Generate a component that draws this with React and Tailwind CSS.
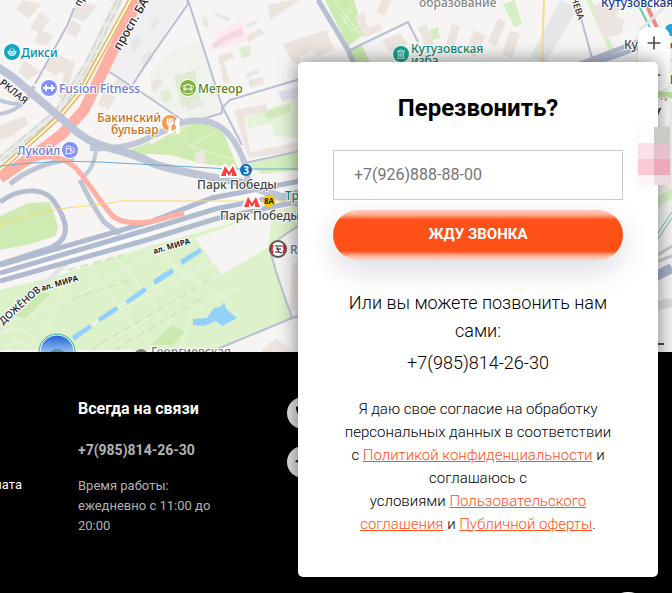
import { FaPhoneAlt, FaTelegramPlane, FaUtensils } from "react-icons/fa";
import { ShoppingBasket, Landmark, Fuel, Plus, Minus, Navigation } from "lucide-react";

const buildings = [
  "22,0 42,4 28,18 16,10",
  "40,12 50,20 40,34 30,28",
  "78,0 96,6 84,22 70,16",
  "72,20 82,26 76,38 66,32",
  "40,30 54,36 46,46 34,42",
  "25,60 40,72 28,80 18,72",
  "52,52 70,60 56,76 44,68",
  "55,55 75,62 66,98 58,98 64,74 48,66",
  "0,125 25,116 28,124 12,136 0,140",
  "118,78 132,86 128,92 112,84",
  "104,90 116,98 108,110 98,104",
  "218,56 232,52 234,58 224,62 230,82 224,84",
  "247,36 260,28 264,34 248,42",
  "248,80 263,77 264,84 250,88",
  "268,5 292,0 300,0 270,20",
  "283,44 300,38 300,64 292,62",
  "202,16 207,18 209,26 204,27",
  "151,84 158,78 163,82 154,94",
  "234,110 266,104 268,112 244,116 250,152 298,142 298,152 248,158",
  "300,38 326,30 334,50 318,56 312,50 300,56",
  "355,16 364,12 368,28 380,24 382,30 364,38",
  "382,0 392,0 384,16 376,12",
  "382,40 400,33 408,44 390,52",
  "418,28 426,24 434,44 426,48",
  "452,24 460,26 454,48 446,44",
  "474,30 486,36 476,58 466,52",
  "498,18 506,22 496,46 488,42",
  "510,30 520,34 512,58 502,54",
  "592,6 610,0 620,8 616,16 598,20",
  "596,22 612,14 624,20 622,34 604,38",
  "262,350 276,338 290,350 290,352 262,352",
  "292,265 300,260 300,310 290,312",
];

const greyBlocks = [
  "560,0 578,8 546,62 530,58",
  "216,12 230,18 228,22 215,15",
  "246,24 256,20 257,24 247,28",
  "246,74 258,69 259,73 247,78",
  "185,106 202,101 203,106 187,111",
  "150,24 156,16 160,20 154,30",
  "130,40 138,34 142,42 134,52",
  "140,58 150,50 154,58 144,68",
];

const halo = { paintOrder: "stroke", stroke: "#ffffff", strokeLinejoin: "round" };

function Label({ x, y, children, size = 12, fill = "#444444", rotate = 0, weight = 500 }) {
  return (
    <text
      x={x}
      y={y}
      fill={fill}
      fontSize={size}
      fontWeight={weight}
      strokeWidth="2"
      transform={`rotate(${rotate} ${x} ${y})`}
      {...halo}
    >
      {children}
    </text>
  );
}

function Pin({ x, y, color, icon: Icon }) {
  return (
    <g>
      <circle cx={x} cy={y} r="9" fill="#ffffff" />
      <circle cx={x} cy={y} r="8" fill={color} />
      {Icon && <Icon x={x - 5} y={y - 5} width="10" height="10" color="#ffffff" />}
    </g>
  );
}

function Metro({ x, y }) {
  return (
    <path
      d={`M${x - 8} ${y + 5}L${x - 4} ${y - 5}L${x} ${y + 1}L${x + 4} ${y - 5}L${x + 8} ${y + 5}H${x + 3}L${x + 3} ${y + 1}L${x} ${y + 5}L${x - 3} ${y + 1}L${x - 3} ${y + 5}Z`}
      fill="#ff3f3f"
      stroke="#ffffff"
      strokeWidth="4"
      strokeLinejoin="round"
      paintOrder="stroke"
    />
  );
}

function CityMap() {
  return (
    <svg
      viewBox="0 0 672 352"
      preserveAspectRatio="xMinYMin slice"
      className="block h-full w-full"
      fontFamily="'Noto Sans', sans-serif"
      role="img"
      aria-label="Карта проезда"
    >
      <rect width="672" height="352" fill="#f6f5f4" />

      {/* quarters */}
      <path d="M150 0H186L150 58L135 84L108 70L142 0Z" fill="#efefef" />
      <path d="M150 70L176 48L200 43L222 112L190 122L150 96Z" fill="#f0f3ec" />
      <path d="M174 76L195 70L200 100L182 108Z" fill="#dfecd3" />
      <path d="M160 92L170 89L172 101L163 103Z" fill="#e0edd4" />
      <path d="M239 48L249 45L251 56L242 58Z" fill="#dfecd3" />
      <path d="M209 51L220 30L240 22L250 40Z" fill="#fde9ef" />
      <path d="M212 44L228 34L241 28L243 36L227 40L214 49Z" fill="#f5d6e1" />
      <path d="M278 92L298 87V98L282 102Z" fill="#e3e0ec" />
      <path d="M246 118L300 97V138L274 136L272 124L248 128Z" fill="#e4f2d8" />
      <path d="M262 112L290 104V112L268 120Z" fill="#d3e9c2" />

      {/* parks */}
      <path d="M0 290L60 275L150 246L200 232L270 212L300 205V350H0Z" fill="#ddf1ca" />
      <path d="M195 238L265 214L272 220L268 247L222 275Z" fill="#f6f5f4" />
      <path d="M300 316L212 352H300Z" fill="#f6f5f4" />
      <path d="M272 250L282 238L300 226V312L290 318Z" fill="#f5f3f2" />
      <path d="M0 216L28 203L50 202L58 226L56 236L30 244L0 250Z" fill="#cfebb1" />
      <path d="M150 145L188 124L208 123L224 134L238 168L200 163L170 155L150 154Z" fill="#cfebb1" />
      <path d="M170 136L192 125M175 130L190 146L215 132M190 146L235 160" stroke="#e6f6d8" strokeWidth="1" fill="none" />
      <path d="M195 153L204 150L206 162L196 164Z" fill="#ece7e1" />
      <path d="M248 164L300 150V170L262 174Z" fill="#d5efc0" />
      <path d="M130 150L150 142V154L136 156Z" fill="#cfebb1" />
      <path d="M325 0H354L364 34L348 46Z" fill="#cdebb0" />
      <path d="M350 50L362 46L370 62H354Z" fill="#ccebaf" />
      <path d="M430 30L438 27L440 38L432 40Z" fill="#d5ebc4" />
      <path d="M503 4L515 0L522 24L514 27Z" fill="#d7efc5" />
      <path d="M586 0H592L614 50L610 52Z" fill="#d9efc7" />
      <path d="M334 0L360 34M344 24L352 6M340 14L352 30L362 24" stroke="#e6f6d8" strokeWidth="1" fill="none" />

      {buildings.map((points) => (
        <polygon key={points} points={points} fill="#ece4df" />
      ))}
      {greyBlocks.map((points) => (
        <polygon key={points} points={points} fill="#e6e7e8" />
      ))}

      {/* park alleys */}
      <g stroke="#eef7e5" strokeWidth="1" fill="none">
        <path d="M0 325L70 300L150 255M92 274L103 285L152 350M60 350L120 305L205 262M95 350L220 275M80 330L215 262" />
        <path d="M45 332L62 285L74 300M120 262L190 350M150 250L235 305M180 350L192 310L240 288" />
        <path d="M0 334C15 324 30 325 40 350M5 346C20 340 30 345 32 352" />
      </g>
      <g stroke="#cfe9ba" strokeWidth="2" strokeDasharray="8 5" fill="none">
        <path d="M90 350L214 278M72 299L130 280M115 350L205 296M68 270L124 255" />
      </g>
      <path d="M12 316L36 292L50 294L26 318Z" fill="#cce9b2" />
      <path d="M150 345L172 325L185 332L172 345Z" fill="#cce9b2" />

      {/* water */}
      <g fill="#93d1fb">
        <path d="M72 336L90 324L92 328L74 341Z" />
        <path d="M98 318L116 306L119 310L100 322Z" />
        <path d="M125 301L144 287L147 291L128 304Z" />
        <path d="M153 280L172 268L174 273L155 285Z" />
        <path d="M180 260L200 248L202 252L182 265Z" />
        <path d="M193 319L207 318L214 308L222 306L224 302L226 309L237 318L222 326L216 321L204 326L193 325Z" />
      </g>

      {/* minor streets */}
      <g stroke="#b9c0d5" strokeWidth="2" fill="none" strokeLinejoin="round">
        <path d="M74 8L68 24L35 84" />
        <path d="M187 0L188 4L150 58L133 84" />
        <path d="M188 0L222 106L242 145" />
        <path d="M108 71L150 98L182 120" />
        <path d="M300 79L230 100L222 108V113L190 123" />
        <path d="M245 163L300 151" />
        <path d="M348 51L408 22L418 42" />
        <path d="M576 0L592 58" />
        <path d="M298 226L280 238L270 250L276 272L292 318L300 316M292 318L215 350" />
      </g>
      <path d="M68 262L36 291L0 330" stroke="#e4e2e2" strokeWidth="4" fill="none" />
      <path d="M318 0L348 50L354 64" stroke="#b7bfd1" strokeWidth="5" fill="none" />
      <path d="M544 0L542 64" stroke="#f3dc8c" strokeWidth="2" fill="none" />

      {/* major roads */}
      <g stroke="#c0c7d6" fill="none">
        <path d="M0 100Q20 108 28 98L34 86M28 98Q16 112 0 114" strokeWidth="4" />
        <path d="M90 148Q128 150 150 137L184 122Q214 116 230 136T248 182L270 195" strokeWidth="6" />
        <path d="M96 150Q94 168 84 176" strokeWidth="4" />
      </g>
      <path d="M0 202C20 187 43 188 53 200C66 218 74 238 50 248L0 264" stroke="#b4bed0" strokeWidth="5" fill="none" />
      <path d="M74 158Q34 164 10 184M80 180Q92 205 104 222L120 234" stroke="#bdc4d3" strokeWidth="5" fill="none" />
      <g stroke="#fafafa" strokeWidth="10" fill="none">
        <path d="M0 274L150 231L210 206L300 189" />
      </g>
      <g stroke="#b1bbcf" strokeWidth="5" fill="none">
        <path d="M0 265L150 222L212 198L300 181" />
        <path d="M0 273L150 229L215 209L300 192" />
        <path d="M0 281L150 239L215 219L300 201" />
      </g>
      <g stroke="#ffb0a6" fill="none">
        <path d="M139 -3L84 110L62 134Q35 155 0 178" strokeWidth="11" />
        <path d="M22 165Q52 147 76 168L90 186Q103 205 112 215T150 222L184 213" strokeWidth="5" />
      </g>

      {/* railway */}
      <path d="M119 0L88 64L58 112L0 160" stroke="#e9e9e6" strokeWidth="9" fill="none" />
      <path d="M117 0L85 64L56 110L0 157M121 0L90 64L61 112L0 162" stroke="#c4c6c2" strokeWidth="1" strokeDasharray="10 5" fill="none" />
      <path d="M131 -1L80 92L60 116L0 170" stroke="#e3b663" strokeWidth="5" fill="none" />
      <path d="M131 -1L80 92L60 116L0 170" stroke="#fff8e8" strokeWidth="2" fill="none" />

      {/* overpass */}
      <path d="M-4 66L14 78L70 126Q86 142 110 148T150 162T240 182L300 204" stroke="#bcc4d5" strokeWidth="8" fill="none" />

      {/* metro lines */}
      <path d="M0 166Q50 160 100 162L230 169H300" stroke="#6fa9d0" strokeWidth="1" fill="none" />
      <path d="M0 225Q40 210 75 207T120 201H300" stroke="#f6d873" strokeWidth="1" fill="none" />

      {/* right edge */}
      <path d="M580 64L648 38M592 64L650 44" stroke="#b1bbcf" strokeWidth="5" fill="none" />
      <path d="M636 0L652 32M644 0L658 32" stroke="#68c9ae" strokeWidth="2" fill="none" />
      <path d="M648 8L658 30" stroke="#ee8a86" strokeWidth="4" fill="none" />
      <path d="M640 30L672 0M650 60H672" stroke="#e3e4e8" strokeWidth="3" fill="none" />
      <path d="M658 92H672V98H658Z" fill="#bfe0a4" />
      <path d="M658 196L672 188V198L658 208Z" fill="#dcefc9" />
      <path d="M656 236L672 212M656 242L672 218" stroke="#6bbd9f" strokeWidth="1" fill="none" />
      <path d="M656 256L672 246M656 262L672 256" stroke="#c9c9c9" strokeWidth="3" fill="none" />
      <path d="M656 276L672 268" stroke="#a9b4ca" strokeWidth="10" fill="none" />
      <path d="M656 306L672 302" stroke="#dcdcdc" strokeWidth="9" fill="none" />
      <path d="M656 344H664" stroke="#444444" strokeWidth="2" />

      {/* street names */}
      <Label x={120} y={51} rotate={-60} size={12} fill="#222222">просп. БАГРАТИОНА</Label>
      <Label x={80} y={7} rotate={-62} size={10} fill="#222222">пр.</Label>
      <Label x={-1} y={84} rotate={39} size={10} fill="#222222">РКЛАЯ</Label>
      <Label x={3} y={325} rotate={-42} size={10} fill="#222222">ДОЖЁНОВ</Label>
      <Label x={42} y={291} rotate={-16} size={8} weight={700} fill="#222222">ал. МИРА</Label>
      <Label x={154} y={254} rotate={-16} size={8} weight={700} fill="#222222">ал. МИРА</Label>
      <Label x={571} y={-2} rotate={72} size={9} fill="#222222">НЕВА</Label>

      {/* places */}
      <Label x={21} y={57} fill="#0b87a8">Дикси</Label>
      <Pin x={12} y={52} color="#17a5c4" icon={ShoppingBasket} />
      <Label x={59} y={93} fill="#6d75d6">Fusion Fitness</Label>
      <Pin x={49} y={88} color="#8490fb" />
      <path d="M44 87V89M46 85V91M52 85V91M54 87V89M46 88H52" stroke="#ffffff" strokeWidth="2" fill="none" />
      <Label x={97} y={122} fill="#c97223">Бакинский</Label>
      <Label x={111} y={134} fill="#c97223">бульвар</Label>
      <Pin x={170} y={123} color="#fa9a4b" icon={FaUtensils} />
      <Label x={17} y={155} fill="#6d75d6">Лукойл</Label>
      <Pin x={70} y={150} color="#8490fb" icon={Fuel} />
      <Label x={198} y={93} fill="#52801b">Метеор</Label>
      <Pin x={188} y={88} color="#7fb43b" />
      <path d="M182 87Q188 82 194 87M183 92Q188 96 193 92M183 89H193M185 85V91M191 85V91" stroke="#ffffff" strokeWidth="1" fill="none" />
      <Label x={419} y={7} fill="#858585">образование</Label>
      <Label x={411} y={53} fill="#128772">Кутузовская</Label>
      <Label x={411} y={65} fill="#128772">изба</Label>
      <Pin x={401} y={54} color="#14a38b" icon={Landmark} />
      <Label x={601} y={7} fill="#153a92">Кутузовская</Label>
      <Label x={624} y={49}>Кутузовская</Label>
      <circle cx="671" cy="30" r="6" fill="#20a5dd" />
      <Label x={670} y={84}>Ва</Label>
      <Label x={660} y={107} fill="#df513f">К</Label>

      <Metro x={229} y={171} />
      <circle cx="246" cy="170" r="6" fill="#0871bd" />
      <text x="246" y="174" textAnchor="middle" fontSize="10" fontWeight="700" fill="#ffffff">3</text>
      <Label x={197} y={189}>Парк Победы</Label>
      <Metro x={252} y={202} />
      <circle cx="269" cy="201" r="6" fill="#ffc800" />
      <text x="269" y="204" textAnchor="middle" fontSize="8" fontWeight="700" fill="#222222">8А</text>
      <Label x={285} y={200} fill="#128772">Триумф</Label>
      <Label x={220} y={220}>Парк Победы</Label>
      <Label x={290} y={254} fill="#777777">R</Label>
      <circle cx="278" cy="249" r="8" fill="#ffffff" stroke="#5b5555" strokeWidth="2" />
      <path d="M273 245A7 7 0 0 0 273 253M283 245A7 7 0 0 1 283 253" stroke="#d8282f" strokeWidth="2" fill="none" />
      <path d="M275 246H282M276 249H281M275 252H279L277 247M279 252L282 253" stroke="#222222" strokeWidth="1" fill="none" />
      <Label x={151} y={356} fill="#777777">Георгиевская</Label>
      <circle cx="141" cy="356" r="7" fill="#848484" />

      <defs>
        <linearGradient id="marker" x1="0" y1="0" x2="0" y2="1">
          <stop offset="0" stopColor="#1c63d7" />
          <stop offset="0.45" stopColor="#8ab4ed" />
        </linearGradient>
      </defs>
      <circle cx="57" cy="352" r="17" fill="url(#marker)" stroke="#ffffff" strokeWidth="1" />
      <circle cx="57" cy="352" r="18" fill="none" stroke="#35a995" strokeWidth="1" />
      <ellipse cx="57" cy="353" rx="7" ry="4" fill="#55929e" />
    </svg>
  );
}

function MapControls() {
  return (
    <div className="absolute top-[27px] right-[2px] flex flex-col gap-2">
      <div className="flex w-8 flex-col rounded-[10px] bg-white shadow">
        <button aria-label="Приблизить" className="flex h-8 items-center justify-center text-[#4d4d4d]">
          <Plus size={20} />
        </button>
        <button aria-label="Отдалить" className="flex h-8 items-center justify-center text-[#4d4d4d]">
          <Minus size={20} />
        </button>
      </div>
      <button aria-label="Моё местоположение" className="flex size-8 items-center justify-center rounded-[10px] bg-white text-[#4d4d4d] shadow">
        <Navigation size={16} fill="currentColor" />
      </button>
    </div>
  );
}

function Footer() {
  return (
    <footer className="flex flex-1 bg-black text-white">
      <div className="flex w-[22px] shrink-0 justify-end overflow-hidden pt-[123px]">
        <a href="#payment" className="text-[13px] leading-5">лата</a>
      </div>

      <div className="ml-14 w-[150px] pt-[47px]">
        <h3 className="text-[16px] leading-5 font-bold whitespace-nowrap">Всегда на связи</h3>
        <a href="tel:+79858142630" className="mt-[21px] block text-[14px] leading-5 font-bold text-[#b3b3b3]">
          +7(985)814-26-30
        </a>
        <p className="mt-4 text-[13px] leading-5 text-[#b3b3b3]">
          Время работы:
          <br />
          ежедневно с 11:00 до
          <br />
          20:00
        </p>
      </div>

      <div className="ml-[59px] flex flex-col gap-[17px] pt-[45px]">
        <a href="#phone" aria-label="Позвонить" className="flex size-8 items-center justify-center rounded-full bg-[#e2e2e2] text-black">
          <FaPhoneAlt size={14} />
        </a>
        <a href="#telegram" aria-label="Telegram" className="flex size-8 items-center justify-center rounded-full bg-[#e2e2e2] text-black">
          <FaTelegramPlane size={18} />
        </a>
      </div>
    </footer>
  );
}

function CallbackModal() {
  return (
    <div className="absolute inset-0 flex items-start justify-end pt-[62px] pr-[14px]">
      <div
        role="dialog"
        aria-labelledby="callback-title"
        className="w-full max-w-[360px] rounded-[5px] bg-white px-[35px] pt-[31px] pb-[41px] text-center shadow-[0_0_20px_rgba(0,0,0,0.5)]"
      >
        <h2 id="callback-title" className="text-[24px] leading-[30px] font-bold text-black">
          Перезвонить?
        </h2>

        <form className="mt-[27px] flex flex-col gap-[10px]" onSubmit={(e) => e.preventDefault()}>
          <input
            type="tel"
            aria-label="Телефон"
            placeholder="+7(926)888-88-00"
            className="h-[50px] w-full border border-[#cccccc] px-5 pb-[2px] text-[16px] outline-none placeholder:text-[#757575]"
          />
          <button className="h-[50px] rounded-full bg-[linear-gradient(#ffcdbb_0px,#ffb79e_4px,#ff5018_10px,#ff5018_41px,#ffb79e_46px,#ffcdbb_50px)] pb-[2px] text-[15px] font-bold text-white shadow-[0_10px_30px_rgba(0,11,48,0.15)]">
            ЖДУ ЗВОНКА
          </button>
        </form>

        <p className="mt-[29px] text-[18px] leading-7 font-light text-black">
          Или вы можете позвонить нам сами:
        </p>
        <p className="mt-1 text-[18px] leading-7 font-light text-black">
          <a href="tel:+79858142630">+7(985)814-26-30</a>
        </p>

        <p className="mt-[21px] px-2 text-[15px] leading-[23px] font-light text-black">
          Я даю свое согласие на обработку персональных данных в соответствии с&nbsp;
          <a href="#privacy" className="text-[#ff5018] underline">Политикой конфиденциальности</a> и соглашаюсь с
          <br />
          условиями <a href="#terms" className="text-[#ff5018] underline">Пользовательского соглашения</a> и{" "}
          <a href="#offer" className="text-[#ff5018] underline">Публичной оферты</a>.
        </p>
      </div>
    </div>
  );
}

function ChatWidget() {
  return (
    <div className="absolute top-[127px] right-[2px] grid w-8 grid-cols-2 shadow-[0_0_10px_rgba(0,0,0,0.05)]">
      <span className="h-4 bg-[#fdfdfd]" />
      <span className="h-4 bg-[#c6ccc2]" />
      <span className="h-4 bg-[#fae0e7]" />
      <span className="h-4 bg-[#e6c0cb]" />
      <span className="h-4 bg-[#f9c9d6]" />
      <span className="h-4 bg-[#eda9bc]" />
      <span className="h-[10px] bg-[#fcf5f7]" />
      <span className="h-[10px] bg-[#e8dde0]" />
    </div>
  );
}

export default function App() {
  return (
    <div className="relative flex min-h-screen flex-col overflow-hidden bg-black font-['Roboto',sans-serif]">
      <section className="relative h-[352px] overflow-hidden">
        <CityMap />
        <MapControls />
      </section>
      <Footer />
      <CallbackModal />
      <ChatWidget />
      <span className="absolute right-5 -bottom-[47px] size-12 rounded-full bg-white" />
    </div>
  );
}
